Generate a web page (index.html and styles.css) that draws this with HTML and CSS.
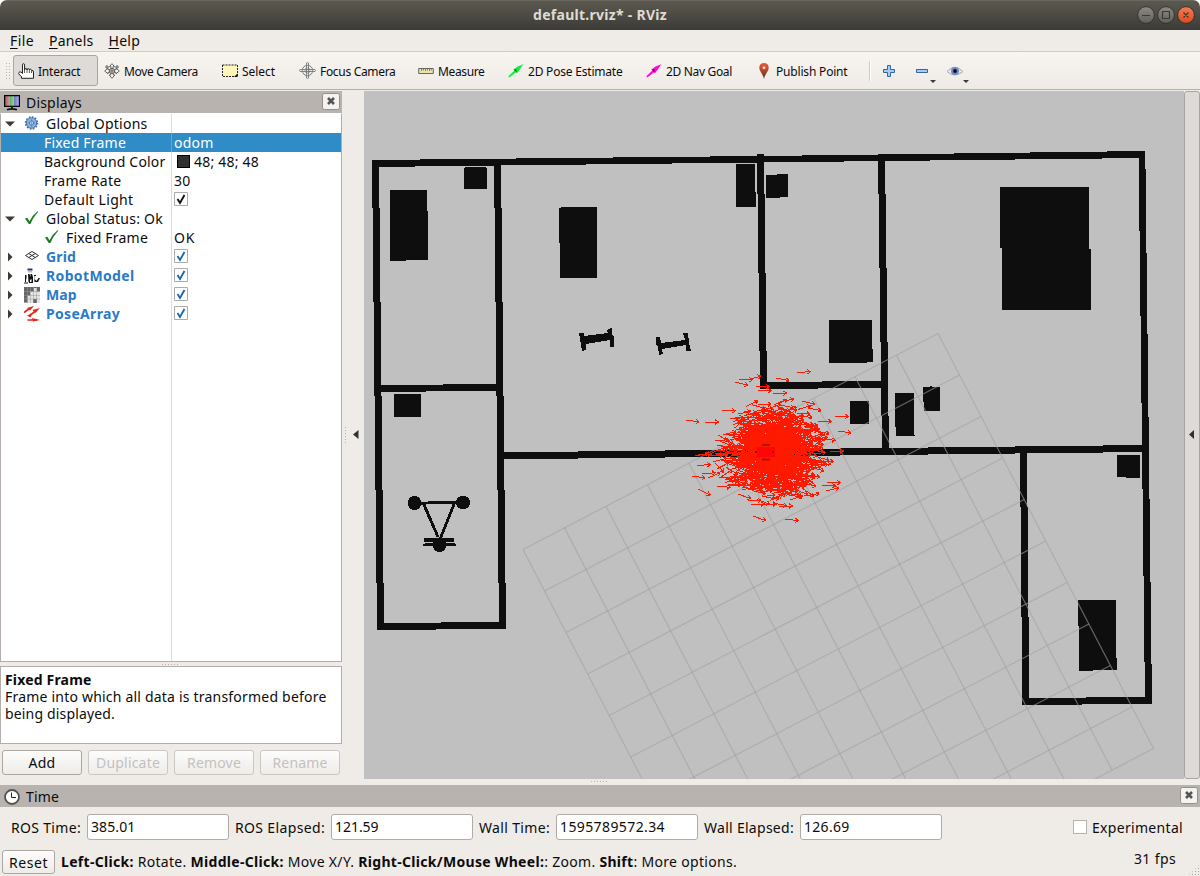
FILE: index.html
```html
<!DOCTYPE html>
<html lang="en">
<head>
<meta charset="utf-8">
<title>default.rviz* - RViz</title>
<link rel="stylesheet" href="styles.css">
</head>
<body>
<div class="window">
  <header class="titlebar">
    <span class="caption" data-w="134">default.rviz* - RViz</span>
    <svg class="winbtns" width="60" height="20" viewBox="0 0 60 20">
      <defs>
        <linearGradient id="gb" x1="0" y1="0" x2="0" y2="1"><stop offset="0" stop-color="#8b8a83"/><stop offset="1" stop-color="#605f59"/></linearGradient>
        <linearGradient id="ob" x1="0" y1="0" x2="0" y2="1"><stop offset="0" stop-color="#f47d56"/><stop offset="1" stop-color="#df4a1b"/></linearGradient>
      </defs>
      <g stroke="#33322e"><circle cx="9" cy="10" r="8.4" fill="url(#gb)"/><circle cx="29" cy="10" r="8.4" fill="url(#gb)"/><circle cx="49" cy="10" r="8.4" fill="url(#ob)"/></g>
      <path d="M5 10.500h8M25.500 6.500h7v7h-7zM46.500 7.500l5 5M51.500 7.500l-5 5" fill="none" stroke="#3a3935" stroke-width="1.200"/>
    </svg>
  </header>
  <nav class="menubar">
    <span class="menu" data-w="24"><u>F</u>ile</span><span class="menu" data-w="44.500"><u>P</u>anels</span><span class="menu" data-w="31.500"><u>H</u>elp</span>
  </nav>
  <div class="toolbar">
    <i class="grip"></i>
    <div class="tool active">
      <svg width="16" height="16" viewBox="0 0 16 16"><path d="M4.500 10.500V1.800Q4.500.7 5.500.7T6.600 1.800V7Q6.600 5.400 7.800 5.500T9 7Q9 5.500 10.200 5.600T11.400 7Q11.500 5.900 12.500 6.100T13.500 7.500Q15.500 7 15.500 9V15.300H3.500V13.500Q1 12 .7 10.500 1 7.500 4.500 10z" fill="#fff" stroke="#222"/><path d="M6.500 7v3M9 7v3M11.400 7v3M13.500 8v2" stroke="#333" stroke-width=".8"/></svg>
      <span data-w="42.500">Interact</span></div>
    <div class="tool">
      <svg width="16" height="16" viewBox="0 0 16 16" fill="#f7f4ef" stroke="#555" stroke-width=".9"><path d="M8 .7l2.600 3H9v3h3v-1.500l3.300 2.800L12 10.800V9.300H9.300V12h1.500L8 15.300 5.200 12h1.500V9.300H4v1.500L.7 8 4 5.200v1.500h3v-3H5.400z"/><circle cx="8" cy="8" r="2.500"/><path d="M8 5v6M5 8h6"/><path d="M2 3h2v2H2zM12 3h2v2h-2z"/></svg>
      <span data-w="74">Move Camera</span></div>
    <div class="tool">
      <svg width="16" height="14" viewBox="0 0 16 14"><path d="M.5 1h15v11.500H.5z" fill="#fdf6b8" stroke="#222" stroke-dasharray="2 1"/><path d="M15.500 9.500v3.500H12z" fill="#111"/></svg>
      <span data-w="33">Select</span></div>
    <div class="tool focus">
      <svg width="17" height="17" viewBox="0 0 17 17" fill="none" stroke="#777"><circle cx="8.500" cy="8.500" r="5.200"/><circle cx="8.500" cy="8.500" r="2.500" stroke="#999"/><path d="M7.500 1q1-1 2 0v15q-1 1-2 0zM1 7.500q-1 1 0 2h15q1-1 0-2z" stroke-width=".9"/></svg>
      <span data-w="75.500">Focus Camera</span></div>
    <div class="tool">
      <svg width="16" height="16" viewBox="0 0 16 16"><path d="M.7 5.500h14.600v5H.7z" fill="#f0e4ae" stroke="#666"/><path d="M3.500 6v2M5.500 6v1.500M7.500 6v2M9.500 6v1.500M11.500 6v2M13.300 6v1.500" stroke="#666" stroke-width=".8"/></svg>
      <span data-w="46.500">Measure</span></div>
    <div class="tool">
      <svg width="16" height="16" viewBox="0 0 16 16"><path d="M15.200 1.200L9.500 3.500 5.500 6.500l.8.900L.2 13.500l1.100 1.100 6.800-5.300.9.900L12.500 5.500z" fill="#12f03c"/><path d="M5.500 6.500l3.500 3.200-.6-3.400z" fill="#087d26"/></svg>
      <span data-w="94.500">2D Pose Estimate</span></div>
    <div class="tool">
      <svg width="16" height="16" viewBox="0 0 16 16"><path d="M15.200 1.200L9.500 3.500 5.500 6.500l.8.900L.2 13.500l1.100 1.100 6.800-5.300.9.900L12.500 5.500z" fill="#fb0ad2"/><path d="M5.500 6.500l3.500 3.200-.6-3.400z" fill="#800070"/></svg>
      <span data-w="66">2D Nav Goal</span></div>
    <div class="tool">
      <svg width="16" height="16" viewBox="0 0 16 16"><defs><linearGradient id="pin" x1="0" y1="0" x2="0" y2="1"><stop offset="0" stop-color="#f05a35"/><stop offset=".6" stop-color="#9d4027"/><stop offset="1" stop-color="#4a3424"/></linearGradient></defs><path d="M8 0C5 0 3.300 2 3.300 4.700 3.300 8 7 11 8 16 9 11 12.700 8 12.700 4.700 12.700 2 11 0 8 0z" fill="url(#pin)"/><circle cx="8" cy="4.800" r="1.500" fill="#f4d5ca"/></svg>
      <span data-w="71.500">Publish Point</span></div>
    <svg class="extras" width="104" height="30" viewBox="0 0 104 30">
      <path d="M3.500 5v20" stroke="#cfcbc7"/><path d="M4.500 5v20" stroke="#fff"/>
      <path d="M21.500 9.500h3v4h4v3h-4v4h-3v-4h-4v-3h4z" fill="#a9cbec" stroke="#2f66a9"/>
      <path d="M50.500 13.500h11v3h-11z" fill="#a9cbec" stroke="#2f66a9"/>
      <path d="M64 24h6l-3 3zM97 24h6l-3 3z" fill="#3c3b37"/>
      <path d="M81 15.500Q88.500 7 97 15.500 88.500 22.500 81 15.500z" fill="#e9e9e9" stroke="#aaa"/><circle cx="89" cy="15" r="4" fill="#7089c4"/><circle cx="89" cy="15" r="1.900" fill="#0a0d1c"/>
    </svg>
  </div>

  <main class="workspace">
    <section class="dock">
      <div class="dock-title">
        <svg width="16" height="17" viewBox="0 0 16 17"><defs><linearGradient id="mon"><stop offset="0" stop-color="#ad5355"/><stop offset=".33" stop-color="#d09a9c"/><stop offset=".34" stop-color="#5cae61"/><stop offset=".66" stop-color="#8fdc93"/><stop offset=".67" stop-color="#7375c7"/><stop offset="1" stop-color="#b8b8f5"/></linearGradient></defs><path d="M.6 1.600h14.800v10.800H.6z" fill="url(#mon)" stroke="#050505" stroke-width="1.200"/><path d="M8 12v3M3 15.800q5-2 10 0" stroke="#111" stroke-width="1.700" fill="none"/></svg>
        <span data-w="56">Displays</span>
        <svg class="closer" width="18" height="17" viewBox="0 0 18 17"><rect x=".5" y=".5" width="17" height="16" rx="2" fill="#f5f3f0" stroke="#95908b"/><path d="M6 5l6 6M12 5l-6 6" stroke="#555" stroke-width="2.600"/></svg>
      </div>
      <div class="tree">
        <div class="row"><svg class="exp" viewBox="0 0 10 10"><path d="M0 2.500h10L5 7.500z"/></svg>
          <svg class="ico" viewBox="0 0 16 16"><circle cx="7.500" cy="7" r="5.200" fill="#8fb4df" stroke="#3c6fae"/><circle cx="7.500" cy="7" r="6" fill="none" stroke="#3c6fae" stroke-width="1.500" stroke-dasharray="1.600 1.500"/><circle cx="7.500" cy="7" r="2.200" fill="#dce8f5" stroke="#4a79b5"/><path d="M7.500 3v8M3.500 7h8" stroke="#527fb9" stroke-width=".6"/></svg>
          <span data-w="101.500">Global Options</span></div>
        <div class="row sub selected"><span data-w="82">Fixed Frame</span><b class="val"><span data-w="39.500">odom</span></b></div>
        <div class="row sub"><span data-w="121.500">Background Color</span><b class="val"><i class="swatch"></i><span data-w="65">48; 48; 48</span></b></div>
        <div class="row sub"><span data-w="77.500">Frame Rate</span><b class="val"><span data-w="16.500">30</span></b></div>
        <div class="row sub"><span data-w="89.500">Default Light</span><b class="val"><svg class="check" viewBox="0 0 14 14"><path d="M.5.5h13v13H.5z"/><path class="tick dark" d="M3.500 7l2.500 4L10.500 3"/></svg></b></div>
        <div class="row"><svg class="exp" viewBox="0 0 10 10"><path d="M0 2.500h10L5 7.500z"/></svg>
          <svg class="ico" viewBox="0 0 16 16"><path d="M1 7.500L3.300 6.800l2.200 3.500Q8.500 4 13.500.200 14.500 0 14 1 9 6.500 6.400 13H4.800z" fill="#1e7b22"/></svg>
          <span data-w="117">Global Status: Ok</span></div>
        <div class="row sub child"><svg class="ico" viewBox="0 0 16 16"><path d="M1 7.500L3.300 6.800l2.200 3.500Q8.500 4 13.500.200 14.500 0 14 1 9 6.500 6.400 13H4.800z" fill="#1e7b22"/></svg><span data-w="82">Fixed Frame</span><b class="val"><span data-w="21">OK</span></b></div>
        <div class="row item"><svg class="exp" viewBox="0 0 10 10"><path d="M3 .5v9L7.500 5z"/></svg>
          <svg class="ico" viewBox="0 0 16 16"><path d="M1.500 6.500L8 2.500l6.500 4L8 10.500zM4.700 4.500l6.600 4M11.300 4.500l-6.600 4" fill="none" stroke="#333"/></svg>
          <span data-w="30">Grid</span><b class="val"><svg class="check" viewBox="0 0 14 14"><path d="M.5.5h13v13H.5z"/><path class="tick" d="M3.500 7l2.500 4L10.500 3"/></svg></b></div>
        <div class="row item"><svg class="exp" viewBox="0 0 10 10"><path d="M3 .5v9L7.500 5z"/></svg>
          <svg class="ico" viewBox="0 0 16 16"><path d="M3.500.5h5v2h-5z" fill="#26356e"/><path d="M4 3h4v1.500H4z" fill="#bbb"/><path d="M1 7h1.500v3L2 12v2H1zM4 6h1.500l1 3V6H8l1 3v5H7.500v-3L6 12v2H4.500zM10 7h2v1h-1.500v3l2 2 2-3H16l-2 4h-3.500z" fill="#111"/><path d="M0 15h4M5 14.500h4" stroke="#111"/></svg>
          <span data-w="88.500">RobotModel</span><b class="val"><svg class="check" viewBox="0 0 14 14"><path d="M.5.5h13v13H.5z"/><path class="tick" d="M3.500 7l2.500 4L10.500 3"/></svg></b></div>
        <div class="row item"><svg class="exp" viewBox="0 0 10 10"><path d="M3 .5v9L7.500 5z"/></svg>
          <svg class="ico" viewBox="0 0 16 16"><path d="M0 0h16v16H0z" fill="#e3e3e3"/><path d="M0 0h16v4.500H13V1H10v3.500H6V8.500H3.500V15.500H0zM9 12h4v4H9z" fill="#666"/><path d="M3.500 0v16M6.500 0v16M9.500 0v16M12.500 0v16M0 4.500h16M0 8.500h16M0 12h16" stroke="#999" stroke-width=".5"/></svg>
          <span data-w="30.500">Map</span><b class="val"><svg class="check" viewBox="0 0 14 14"><path d="M.5.5h13v13H.5z"/><path class="tick" d="M3.500 7l2.500 4L10.500 3"/></svg></b></div>
        <div class="row item"><svg class="exp" viewBox="0 0 10 10"><path d="M3 .5v9L7.500 5z"/></svg>
          <svg class="ico" viewBox="0 0 16 16"><path d="M0 6.500L6 2M5 10L13 4M3.500 14H13" stroke="#e62512" stroke-width="1.700"/><path d="M3 2L10 0 6 4.500zM8.500 4L16 2 11 7zM8 12l8 2-7 1.500zM3 9.500l5-2-1.500 4z" fill="#e62512"/></svg>
          <span data-w="74">PoseArray</span><b class="val"><svg class="check" viewBox="0 0 14 14"><path d="M.5.5h13v13H.5z"/><path class="tick" d="M3.500 7l2.500 4L10.500 3"/></svg></b></div>
      </div>
      <div class="splitter"><i class="dots"></i></div>
      <div class="help">
        <strong><span data-w="86.500">Fixed Frame</span></strong>
        <div><span data-w="321.500">Frame into which all data is transformed before</span></div>
        <div><span data-w="110">being displayed.</span></div>
      </div>
      <div class="buttons">
        <div class="btn"><span data-w="27">Add</span></div><div class="btn off"><span data-w="64">Duplicate</span></div><div class="btn off"><span data-w="54">Remove</span></div><div class="btn off"><span data-w="55">Rename</span></div>
      </div>
    </section>
    <div class="handle"><svg width="22" height="20" viewBox="0 0 22 20"><path d="M16.500 5v9l-5.500-4.500z" fill="#33312e"/><path d="M3.500 2v17" stroke="#b8b3ae" stroke-dasharray="1 2"/></svg></div>
    <svg class="view" width="820" height="688" viewBox="364 91 820 688">
      <g class="map">
        <path d="M372 160L758 156v-2h6v2l381-5v7L372 167z"/>
        <path d="M372 160h7L384 629h-7z"/>
        <path d="M494 160h7L506 629h-7z"/>
        <path d="M377 623.300L506 621.700v7L377 630.200z"/>
        <path d="M380 385.400L500 383.700v7L380 392z"/>
        <path d="M500 452.400L1147 445v7L500 459.400z"/>
        <path d="M757 154h7l3 235h-7z"/>
        <path d="M760 382.300L885 380.700v7L760 389.200z"/>
        <path d="M878 156h7l4 296h-7z"/>
        <path d="M1138.600 152h6.700L1152 704h-7z"/>
        <path d="M1020 450h7l2.300 255h-7z"/>
        <path d="M1022 698.300L1152 696.700v7L1022 705.200z"/>
        <path d="M390 190h37v21h1v49h-22v1h-16zM464 168h1v-1h21v1h1v21h-23zM394 394h27v23h-27zM559 208h2v-1h36v71h-37v-35h-1zM736 164h19v28h1v15h-20zM766 175h11v-1h11v23h-8v1h-14zM829 320h43v29h1v13h-6v1h-38zM1000 187h89v62h1.500v61h-89v-62h-1.500zM850 401h19v23h-19zM895 393h19v42h1v1h-19v-9h-1zM923 387h7v-1h2v1h8v24h-16v-9h-1zM1117 455h23v23h-14v-1h-9zM1078 600h38v58h1v12h-24v1h-14v-45h-1z"/>
        <path d="M579 333h5v3l24-3-1-3 4-2h1v7l2 1v11h-4v-7l-24 4v6l-4 1-2-12z"/>
        <path d="M656 337h4l1 6 24-3-2-7h5l1 10 2 8h-5v-6l-24 4 1 5-4 1-1-8-2-2z"/>
        <circle cx="414.500" cy="503" r="7"/><circle cx="463" cy="502.500" r="7"/><circle cx="439.500" cy="545" r="7"/>
        <path d="M420 502.200l9-.8h28v2.400h-8l-29 .8zM422 504l3-1 14.500 34h-3zM453 503h3l-14 35h-3zM424 538h30v4h-30zM423 544l4-1h28l1 2.500H429l-6 1z"/>
      </g>
      <g class="grid" id="grid"></g>
      <path id="poses" class="poses"/>
      <path d="M757 447h18v10h-18z" fill="#ff0505"/><path d="M762 445h8M762 459.500h8" stroke="#b5100a" stroke-width="2"/><path d="M756 451v2M773 451v2" stroke="#5c0704" stroke-width="1.500"/>
    </svg>
    <div class="handle right"><svg width="14" height="12" viewBox="0 0 14 12"><path d="M9 1v9L4 5.500z" fill="#33312e"/></svg></div>
  </main>

  <div class="splitter low"><i class="dots"></i></div>
  <footer>
    <div class="dock-title">
      <svg width="16" height="16" viewBox="0 0 16 16"><circle cx="8" cy="8" r="7" fill="#fff" stroke="#55534f" stroke-width="1.800"/><path d="M7.500 3.500v5H12" fill="none" stroke="#222"/></svg>
      <span data-w="33">Time</span>
      <svg class="closer" width="18" height="17" viewBox="0 0 18 17"><rect x=".5" y=".5" width="17" height="16" rx="2" fill="#f5f3f0" stroke="#95908b"/><path d="M6 5l6 6M12 5l-6 6" stroke="#555" stroke-width="2.600"/></svg>
    </div>
    <div class="times">
      <span data-w="70">ROS Time:</span><div class="field"><span data-w="44.500">385.01</span></div>
      <span data-w="90">ROS Elapsed:</span><div class="field"><span data-w="43.500">121.59</span></div>
      <span data-w="71">Wall Time:</span><div class="field"><span data-w="105">1595789572.34</span></div>
      <span data-w="90">Wall Elapsed:</span><div class="field"><span data-w="45.500">126.69</span></div>
      <i class="box"></i><span data-w="91">Experimental</span>
    </div>
    <div class="status">
      <div class="btn reset"><span data-w="39">Reset</span></div>
      <span class="hint" data-w="676"><strong>Left-Click:</strong> Rotate. <strong>Middle-Click:</strong> Move X/Y. <strong>Right-Click/Mouse Wheel:</strong>: Zoom. <strong>Shift</strong>: More options.</span>
      <span class="fps" data-w="42">31 fps</span>
      <i class="sizer"></i>
    </div>
  </footer>
</div>
<script src="app.js"></script>
</body>
</html>
```
FILE: styles.css
```css
* { box-sizing: border-box; }
body { margin: 0; background: #fff; font: 14px/19px "Noto Sans", "Open Sans", sans-serif; color: #0c0c0c; }
.window { width: 1200px; height: 876px; display: flex; flex-direction: column; background: #efebe7; border-radius: 7px 7px 0 0; overflow: hidden; }
span[data-w] { display: inline-block; white-space: nowrap; flex: none; }
svg { display: block; flex: none; }
.titlebar { height: 30px; flex: none; display: flex; justify-content: center; align-items: center; position: relative; background: linear-gradient(#5b594f, #3d3b37); border-top: 1px solid #6a685e; color: #dfdbd2; font-weight: 700; padding-bottom: 2px; }
.winbtns { position: absolute; right: 3px; top: 4px; }
.menubar { height: 22px; flex: none; display: flex; gap: 15px; padding: 1px 0 0 10px; border-bottom: 1px solid #d0ccc8; }
.menu u { text-underline-offset: 2px; }
.toolbar { height: 37px; flex: none; display: grid; grid-template-columns: 12px 86px 118px 78px 118px 90px 138px 110px 110px auto; align-items: center; background: linear-gradient(#f8f5f0, #eeebe7); font-size: 12px; }
.grip { width: 5px; height: 18px; margin-left: 5px; background: radial-gradient(circle, #b8b4af 0.7px, transparent 1px) 0 0 / 3px 3px; }
.tool { display: flex; align-items: center; gap: 4px; height: 31px; padding-left: 6px; }
.tool span { padding-top: 1px; }
.focus { padding-left: 5px; }
.active { background: #dedad7; border: 1px solid #aaa5a1; border-radius: 3px; padding-left: 4px; margin-left: 1px; width: 85px; }
.extras { margin-left: 6px; }
.workspace { height: 690px; flex: none; display: flex; border-top: 1px solid #b4afab; padding-top: 1px; }
.dock { width: 342px; flex: none; display: flex; flex-direction: column; }
.dock-title { height: 22px; flex: none; display: flex; align-items: center; gap: 6px; background: #b8b3af; padding: 1px 2px 0 4px; }
.closer { margin-left: auto; margin-top: -2px; }
.tree { height: 549px; flex: none; background: linear-gradient(#ddd, #ddd) 170px 0 / 1px 100% no-repeat #fff; border: 1px solid #b3aeaa; border-top-color: #fff; }
.row { height: 19px; display: flex; align-items: center; padding-left: 4px; position: relative; }
.exp { width: 10px; height: 10px; margin-right: 9px; fill: #3c3b37; }
.ico { width: 16px; height: 16px; margin-right: 6px; }
.sub { padding-left: 43px; }
.selected { background: #308cc6; color: #fff; }
.selected::after { content: ""; position: absolute; left: 170px; top: 0; width: 1px; height: 19px; background: #5fa6d2; }
.val { position: absolute; left: 173px; top: 0; height: 19px; display: flex; align-items: center; font-weight: 400; color: inherit; }
.swatch { width: 13px; height: 13px; background: #303030; border: 1px solid #000; margin: 0 4px 0 3px; }
.item > span { color: #2a7ac6; font-weight: 700; }
.check { width: 14px; height: 14px; fill: #fff; stroke: #b0aba7; margin-top: -1px; }
.check .tick { fill: none; stroke: #1e68ad; stroke-width: 1.9; }
.check .dark { stroke: #111; }
.splitter { height: 4px; flex: none; display: flex; justify-content: center; align-items: center; }
.dots { width: 18px; height: 1px; background: repeating-linear-gradient(90deg, #b5b0ac 0 1px, transparent 1px 3px); }
.help { height: 78px; flex: none; background: #fff; border: 1px solid #b3aeaa; padding: 4px 4px; line-height: 17px; }
.help strong { display: block; }
.buttons { display: flex; gap: 6px; padding: 6px 2px 0; }
.btn { width: 80px; height: 25px; display: flex; align-items: center; justify-content: center; border: 1px solid #aca7a3; border-radius: 3px; background: linear-gradient(#fdfdfc, #eeebe8); }
.off { color: #c4c1be; border-color: #cbc7c4; }
.handle { width: 22px; flex: none; display: flex; align-items: center; }
.right { width: 16px; background: #dedad7; border: 1px solid #aaa5a1; border-radius: 3px; }
.view { background: #c0c0c0; }
.map { fill: #0e0e0e; shape-rendering: crispEdges; }
.grid { stroke: #a0a0a0; stroke-opacity: .6; stroke-width: 1.2; }
.poses { fill: none; stroke: #ff1900; stroke-width: 1; shape-rendering: crispEdges; }
.low { height: 6px; padding-bottom: 1px; }
footer { flex: 1; display: flex; flex-direction: column; }
.times { height: 41px; display: flex; align-items: center; padding-left: 11px; }
.field { width: 142px; height: 26px; margin: -2px 6px 0 6px; padding: 2px 3px; background: #fff; border: 1px solid #b0aba7; border-radius: 3px; }
.box { width: 14px; height: 14px; background: #fff; border: 1px solid #b7b2ae; margin: -1px 5px 0 125px; }
.status { height: 28px; display: flex; align-items: center; padding-left: 2px; position: relative; }
.reset { width: 53px; height: 24px; margin-right: 6px; }
.hint { margin-top: -2px; }
.fps { margin: -7px 0 0 397px; }
.sizer { position: absolute; right: 0; bottom: 0; width: 12px; height: 12px; background: radial-gradient(circle, #aaa5a1 .7px, transparent 1px) 0 0 / 3px 3px; clip-path: polygon(100% 0, 100% 100%, 0 100%); }
```
FILE: app.js
```js
// Labels fill their design widths by spacing the letters evenly.
document.querySelectorAll("span[data-w]").forEach(el => {
  const want = parseFloat(el.dataset.w);
  const n = el.textContent.length;
  const have = el.getBoundingClientRect().width;
  el.style.letterSpacing = ((want - have) / n).toFixed(3) + "px";
  el.style.width = want + "px";
});

// Ground grid: ten by ten cells from its top corner.
const lines = [];
for (let i = 0; i <= 10; i++) {
  const ax = 938 + 21.55 * i, ay = 333.5 + 41.5 * i;
  const bx = 938 - 41.5 * i, by = 333.5 + 21.6 * i;
  lines.push(`<path d="M${ax} ${ay}l-415 216M${bx} ${by}l215.5 415"/>`);
}
document.getElementById("grid").innerHTML = lines.join("");

// Pose arrows: a gaussian cloud plus the stray ones round it.
let seed = 7;
const rnd = () => (seed = (seed * 16807) % 2147483647) / 2147483647;
const gauss = () => Math.sqrt(-2 * Math.log(rnd())) * Math.cos(2 * Math.PI * rnd());
let d = "";
function arrow(x, y, a) {
  const ex = x + 13.5 * Math.cos(a), ey = y + 13.5 * Math.sin(a);
  const p = t => `M${ex.toFixed(1)} ${ey.toFixed(1)}L${(ex - 4 * Math.cos(a + t)).toFixed(1)} ${(ey - 4 * Math.sin(a + t)).toFixed(1)}`;
  d += `M${x.toFixed(1)} ${y.toFixed(1)}L${ex.toFixed(1)} ${ey.toFixed(1)}` + p(.6) + p(-.6);
}
for (let i = 0; i < 1150; i++) {
  const gx = gauss(), gy = gauss();
  if (gx * gx + gy * gy > 6.2) continue;
  arrow(766 + 22 * gx, 452 + 21 * gy, gauss() * .28);
}
[[686,420,.15],[705,422,0],[735,382,.25],[739,380,-.02],[748,380,-.3],[756,386,.05],[758,390,.05],[776,378,.2],[797,372.500,-.06],[773,394,-.08],[802,401,.25],[808,408,.2],[835,416.500,0],[838,431,.15],[830,451,0],[695,456,-.2],[697,465.500,-.07],[692,476,.15],[702,474,-.1],[698,489,.45],[708,478,-.4],[722,410.500,.03],[738,494,.35],[751,504,0],[763,504,0],[753,516,.35],[785,519.500,.07],[827,482,.05],[826,491,-.25],[822,439,.1],[818,422,-.05],[816,431,.2],[820,462,-.05],[822,485,.05],[806,496,-.2],[790,500,-.3],[779,506,0],[717,486,.1],[715,441,-.1],[698,454,0],[710,455,0],[724,453,.05]]
  .forEach(p => arrow(...p));
document.getElementById("poses").setAttribute("d", d);
```
